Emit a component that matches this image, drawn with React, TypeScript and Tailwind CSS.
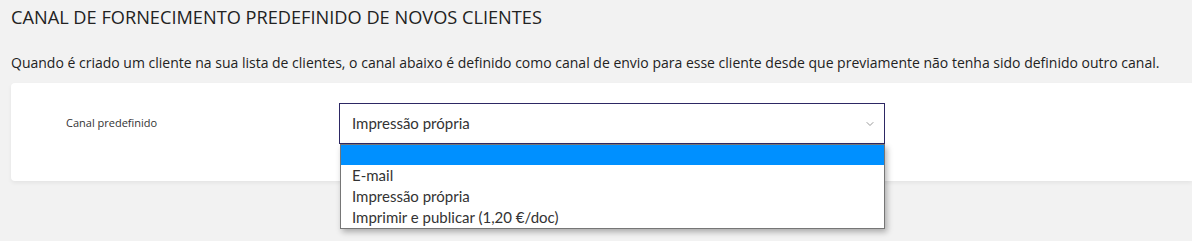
import { ChevronDown } from 'lucide-react';

const options = ['', 'E-mail', 'Impressão própria', 'Imprimir e publicar (1,20 €/doc)'];

export default function App() {
  return (
    <div className="h-[241px] w-[1192px] overflow-hidden bg-[#f2f2f2] pl-[11px] font-['Open_Sans',sans-serif] text-[#222]">
      <h2 className="pt-[5px] text-[18.2px] leading-[24px]">
        CANAL DE FORNECIMENTO PREDEFINIDO DE NOVOS CLIENTES
      </h2>
      <p className="mt-[24px] text-[14px] leading-[19px]">
        Quando é criado um cliente na sua lista de clientes, o canal abaixo é definido como canal de envio para esse
        cliente desde que previamente não tenha sido definido outro canal.
      </p>
      <div className="mt-[11px] flex h-[98px] items-start rounded-l-[4px] bg-white pt-[20px] shadow-[0_2px_4px_rgba(0,0,0,0.06)]">
        <label className="mt-[12px] w-[328px] pl-[55px] text-[11px] text-[#333]">Canal predefinido</label>
        <div className="relative w-[546px]">
          <div className="flex h-[41px] items-center justify-between border border-[#2d2864] bg-white pl-[12px] pr-[8px] font-['Lato',sans-serif] text-[15px] text-[#333]">
            <span>Impressão própria</span>
            <ChevronDown size={12} strokeWidth={2} className="text-[#999]" />
          </div>
          <ul className="absolute left-[1px] top-[41px] z-10 w-[545px] border border-[#767676] bg-white font-['Lato',sans-serif] text-[15px] leading-[21px] text-[#333] shadow-[2px_3px_6px_rgba(0,0,0,0.3)]">
            {options.map((o, i) => (
              <li key={i} className={i === 0 ? 'h-[20px] bg-[#0090ff]' : 'h-[21px] pl-[11px]'}>
                {o}
              </li>
            ))}
          </ul>
        </div>
      </div>
    </div>
  );
}
